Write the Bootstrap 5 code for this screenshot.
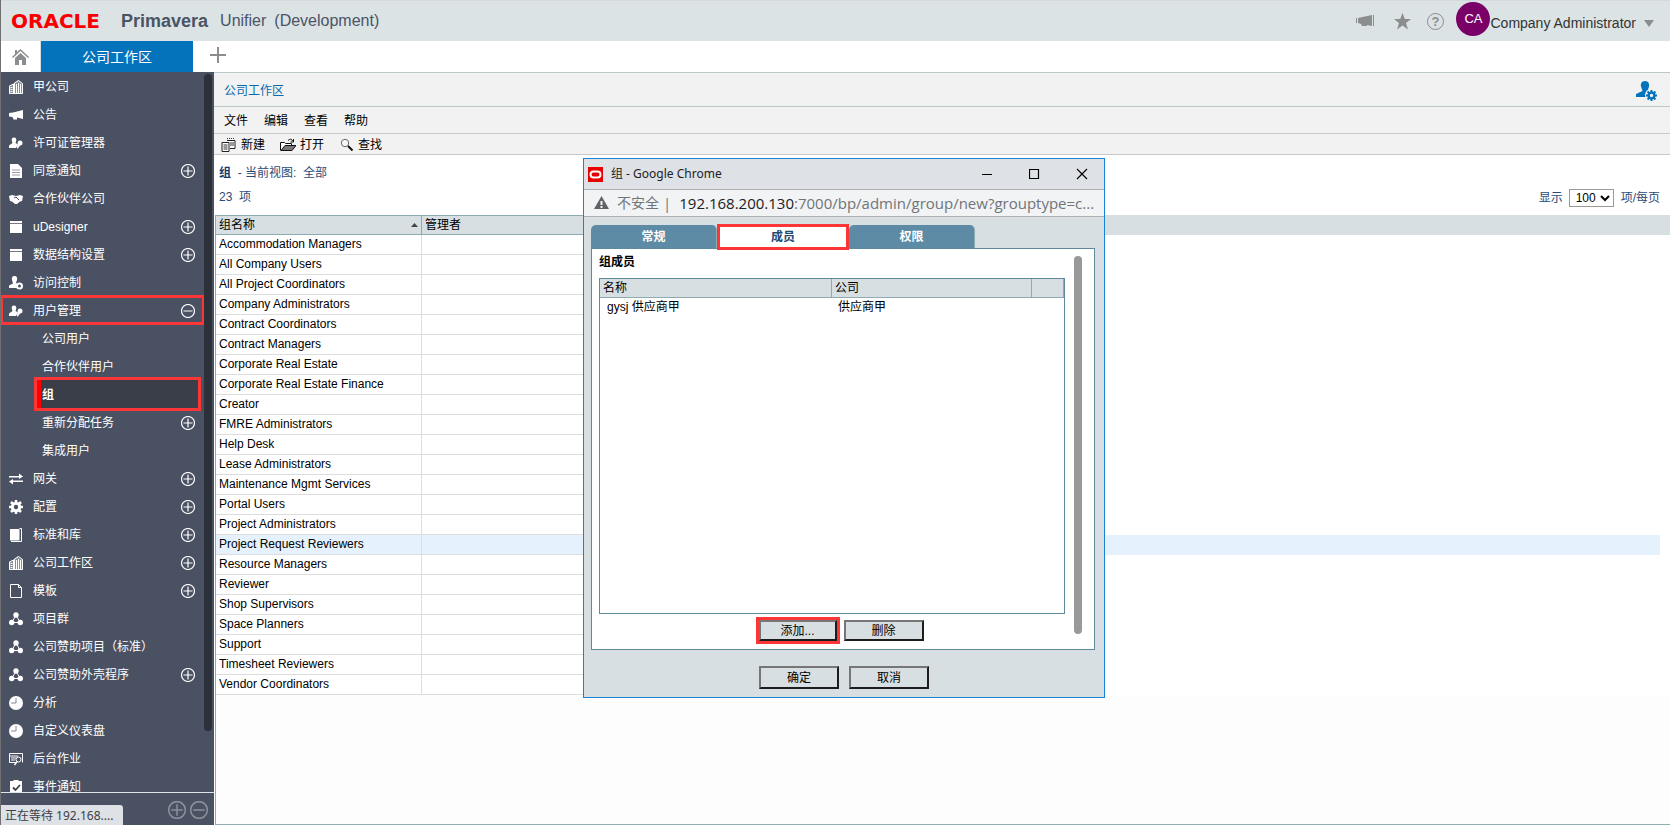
<!DOCTYPE html>
<html lang="zh-CN">
<head>
<meta charset="utf-8">
<meta name="viewport" content="width=device-width, initial-scale=1">
<title>Primavera Unifier</title>
<link href="https://cdn.jsdelivr.net/npm/bootstrap@5.3.0/dist/css/bootstrap.min.css" rel="stylesheet">
<style>
body{font:12px/18px "Liberation Sans","Noto Sans CJK SC",sans-serif;color:#000;height:100vh;overflow:hidden;border-left:1px solid #707070}
a{text-decoration:none;color:inherit}
button{font:inherit}
svg{display:block;flex:none}
.plain{border:0;background:none;padding:0;color:inherit}
.topbar{height:41px;background:#dbe3e5;border-top:1px solid #d3d9dc;color:#4b5465;padding:0 8px 0 10px}
.oracle{font:700 20px/24px "DejaVu Sans",sans-serif;color:#f80000;width:95px}
.prod{font-size:18px;font-weight:700;margin-left:15px}
.sub{font-size:16px}
.avatar{width:34px;height:34px;background:#7a0068;color:#fff;font-size:13px;margin:0 0 4px 12px}
.user{font-size:14px;color:#333}
.tabbar{height:31px;background:#fff}
.home{width:40px;color:#8b8d8f;border-right:1px solid #d5dcdf}
.worktab{width:152px;background:#0572bc;color:#fff;font-size:14px}
.side{width:213px;background:#4a5162;color:#fff}
.tree{overflow:hidden;min-height:0}
.tree li{height:28px;padding:2px 19px 0 8px;display:flex;align-items:center}
.tree li>svg:first-child{width:14px;height:14px;margin-right:10px}
.tree li>a{flex:1;color:#fff}
.tree .child{padding-left:41px}
.tree .current{margin:0 16px 0 36px;padding:2px 0 0 1px;background:#393e48;border-left:4px solid #f00;font-weight:700;outline:3px solid #fb3636}
.tree .open{outline:3px solid #fb3636;outline-offset:-2px;margin:0 10px 0 0;padding:2px 9px 0 8px}
.thumb{right:2px;top:2px;bottom:94px;width:8px;border-radius:4px;background:#2c3039}
.sidefoot{height:33px;border-top:1px solid #dfe5e7;padding:2px 6px 0 0;color:#8b909b}
.status{left:0;bottom:0;width:122px;height:20px;background:#dee1e6;color:#3c4043;border-radius:0 3px 0 0;padding:2px 4px 0;font-family:"Noto Sans","Noto Sans CJK SC",sans-serif}
.bar{background:#f2f2f2;border-bottom:1px solid #c8c8c8;padding-top:2px}
.crumb{height:35px;border-top:1px solid #bcc9ca;border-bottom-color:#bcc9ca;color:#0a69ad;padding:2px 12px 0 10px}
.menus{height:27px;padding-left:10px;gap:16px}
.tools{height:21px;padding-left:7px;gap:15px}
.info{height:60px;padding:9px 10px 0 5px;color:#2b4a78}
.info b{color:#123a6c}
.count{margin-top:6px}
.pager select{width:45px;height:18px;border:1px solid #999;font-size:12px;padding:0 0 0 2px;background:#fff;color:#000;margin:0 7px 0 6px}
.listarea{border-left:1px solid #8fabb2;border-bottom:1px solid #92adb3;margin-left:1px;background:#fdfdfd}
.grid{width:100%;border-collapse:separate;border-spacing:0;table-layout:fixed}
.grid th,.grid td{height:20px;padding:0 3px;line-height:18px;vertical-align:middle;white-space:nowrap}
.grid td{line-height:19px}
.grid th{background:#d8dfe2;font-weight:400}
.grid th.edge{border:solid #8fabb2;border-width:1px 1px 1px 0}
.grid td{background:#fff}
.grid td.edge{border-right:1px solid #ddd;border-bottom:1px solid #ddd}
.grid .on td{background:#e5f2fd}
.grid .on td:last-child{background:#fff}
.dlg{left:582px;top:158px;width:522px;height:540px;background:#d8dfe2;border:1px solid #1883d7;display:flex;flex-direction:column}
.dlgtitle{height:31px;background:#dee1e6;border-bottom:1px solid #b0b0b0;font-family:"Noto Sans","Noto Sans CJK SC",sans-serif;color:#222;padding:0 16px 0 4px}
.addr{height:27px;background:#f1f3f4;border-bottom:1px solid #b0b0b0;font:15px/20px "Open Sans","Noto Sans CJK SC",sans-serif;color:#70757a;padding:0 10px}
.addr .warn{font-size:14px}
.host{color:#202124}
.dtabs{padding:8px 7px 0 7px}
.dtabs button{width:126px;height:23px;border:0;border-radius:5px 5px 0 0;background:#5d8aa5;color:#fff;font-weight:700;border-right:1px solid #8fabb2}
.dtabs .cur{width:132px;background:#fff;color:#1f4a73;border:3px solid #fb3636;height:26px;border-radius:0;position:relative;z-index:1;margin:-1px 0 -2px}
.panel{flex:1;min-height:0;margin:0 9px 0 7px;border:1px solid #5d8a9d;background:#fff;padding:4px 29px 8px 7px}
.members{flex:1;border:1px solid #5d8a9d;margin-top:7px}
.members th{border-right:1px solid #8fabb2;border-bottom:1px solid #8fabb2}
.members .grid th{height:19px;line-height:16px}
.members .grid td{height:18px;line-height:18px}
.members td:first-child{padding-left:7px}
.members td:nth-child(2){padding-left:6px}
.vbar{right:12px;top:7px;bottom:15px;width:8px;border-radius:4px;background:#999}
.cmd{width:80px;background:#d8dfe2;border:2px solid;border-color:#767676 #1c1c1c #1c1c1c #767676;color:#000;padding:0;line-height:18px;height:21px}
.big{height:23px}
.memberbtns{gap:7px;margin-top:6px;padding-left:18px}
.mark-add{outline:3px solid #fb3636;width:78px}
.dlgbtns{gap:10px;padding:16px 0 8px}
</style>
</head>
<body class="d-flex flex-column position-relative">
<svg width="0" height="0" class="position-absolute">
<symbol id="bld" viewBox="0 0 14 14"><path d="M0 5.500 4.500 3.500 9 0l5 3.500V14H0z" fill="#fff" fill-opacity=".35"/><path d="M.5 13.500V6l4-2v9.500M5.500 13V3l4-2.500 4 3v10H.5" fill="none" stroke="#fff"/><path d="M1.500 7.500h2M1.500 9.500h2M1.500 11.500h2" stroke="#fff"/><path d="M7.500 4v9M9.500 3v10M11.500 4v9" stroke="#fff" fill="none"/></symbol>
<symbol id="horn" viewBox="0 0 14 14"><path d="M0 5 4 4.500 14 2v9L8 9.500V11.500H4.500L3.500 9 0 8.500z" fill="currentColor"/></symbol>
<symbol id="usr" viewBox="0 0 14 14"><path d="M5 1.500c2 0 2.500 1.500 2.300 3L6.500 7l2.500 1.500-2 3.500H0V9.500L3.500 7 2.700 4.500C2.500 3 3 1.500 5 1.500z" fill="#fff"/><path d="M11 4.500a2.500 2.500 0 1 1 0 5L8.500 13 7.800 10.500 9 8.500A2.500 2.500 0 0 1 11 4.500z" fill="#fff"/></symbol>
<symbol id="doc" viewBox="0 0 14 14"><path d="M1 0h8l4 4v10H1z" fill="#fff"/><path d="M3 6h8M3 8.500h8M3 11h8" stroke="#99a" fill="none"/></symbol>
<symbol id="hands" viewBox="0 0 14 14"><path d="M0 4l3-1 4 1 4-1 3 1-1 5-2 .5L8 12H6L3 9.500 1 9z" fill="#fff"/><path d="M5 6l2-1 3 3" stroke="#4a5162" fill="none"/></symbol>
<symbol id="win" viewBox="0 0 14 14"><path d="M1 1h12v12H1z" fill="#fff"/><path d="M1 3.500h12" stroke="#778"/></symbol>
<symbol id="acc" viewBox="0 0 14 14"><path d="M5.500 0C8 0 8.500 2 8 4L7 7l1.500 1L8 12H0V9.500L4 7.500 3 4C2.500 2 3 0 5.500 0z" fill="#fff"/><circle cx="10.500" cy="10" r="2.500" fill="none" stroke="#fff" stroke-width="2"/></symbol>
<symbol id="swap" viewBox="0 0 14 14"><path d="M0 4h10V1.500L14 4.500 10 7V5.500H0zM14 8.500H4V7L0 9.500 4 12.500V10h10z" fill="#fff"/></symbol>
<symbol id="gear" viewBox="0 0 14 14"><circle cx="7" cy="7" r="3.700" fill="none" stroke="currentColor" stroke-width="3"/><path d="M7 0v3M7 11v3M0 7h3M11 7h3M2 2l2 2M10 10l2 2M12 2l-2 2M2 12l2-2" stroke="currentColor" stroke-width="2.600"/></symbol>
<symbol id="book" viewBox="0 0 14 14"><path d="M1 1h9.500v11.500H1z" fill="#fff"/><path d="M10.500.500h2v13H2" stroke="#fff" fill="none"/></symbol>
<symbol id="page" viewBox="0 0 14 14"><path d="M1.500.5h8l3 3v10h-11zM9.500.5v3h3" fill="none" stroke="#fff"/></symbol>
<symbol id="tri" viewBox="0 0 14 14"><circle cx="7" cy="3" r="2.700" fill="#fff"/><circle cx="2.700" cy="10.500" r="2.700" fill="#fff"/><circle cx="11.300" cy="10.500" r="2.700" fill="#fff"/><path d="M7 3 2.700 10.500h8.600z" stroke="#fff" fill="none"/></symbol>
<symbol id="pie" viewBox="0 0 14 14"><circle cx="7" cy="7" r="7" fill="#fff"/><path d="M7 2v5H2" stroke="#889" fill="none"/></symbol>
<symbol id="job" viewBox="0 0 14 14"><path d="M7 10.500H.5v-9h13v9M.5 4H9M2 6h5M2 8h4" fill="none" stroke="#fff"/><circle cx="9.500" cy="7.500" r="2.500" fill="none" stroke="#fff"/><path d="M8 9.500 5.500 13" stroke="#fff" stroke-width="1.500"/></symbol>
<symbol id="chk" viewBox="0 0 14 14"><path d="M1 1h3l1-1h4l1 1h3v13H1z" fill="#fff"/><path d="M4 7.500l2.500 2.500L11 5" fill="none" stroke="#3a4152" stroke-width="1.800"/></symbol>
<symbol id="plus" viewBox="0 0 14 14"><path d="M7 .5a6.500 6.500 0 1 1 0 13 6.500 6.500 0 0 1 0-13zM7 2.500v9M2.500 7h9" fill="none" stroke="currentColor" stroke-width="1.200"/></symbol>
<symbol id="minus" viewBox="0 0 14 14"><path d="M7 .5a6.500 6.500 0 1 1 0 13 6.500 6.500 0 0 1 0-13zM2.500 7h9" fill="none" stroke="currentColor" stroke-width="1.200"/></symbol>
</svg>

<header class="topbar d-flex align-items-center flex-shrink-0">
  <span class="oracle">ORACLE</span><span class="prod">Primavera</span><span class="sub ms-2 ps-1">Unifier</span><span class="sub ms-2">(Development)</span>
  <div class="d-flex align-items-center ms-auto me-2">
    <button class="plain" aria-label="公告"><svg width="18" height="14" viewBox="0 0 18 14" fill="#8b8d8f"><path d="M0 4h1v5H0zM2 4l14-3v11l-5-1v1H6l-1-2-3-1zM17 1h1v11h-1z"/></svg></button>
    <button class="plain ms-3" aria-label="收藏"><svg class="ms-1" width="17" height="17" viewBox="0 0 17 17" fill="#8b8d8f"><path d="m8.500 0 2.300 6H17l-5 4 2 6.500-5.500-4-5.500 4L5 10 0 6h6.200z"/></svg></button>
    <button class="plain ms-3" aria-label="帮助"><svg width="17" height="17" viewBox="0 0 17 17"><circle cx="8.500" cy="8.500" r="8" fill="none" stroke="#8b8d8f"/><text x="8.500" y="13" text-anchor="middle" font-size="13" font-weight="700" fill="#8b8d8f">?</text></svg></button>
    <span class="avatar rounded-circle d-flex align-items-center justify-content-center">CA</span>
    <a href="#" class="user d-flex align-items-center mt-1">Company Administrator<svg class="ms-2" width="10" height="7"><path d="M0 0h10L5 7z" fill="#8b8d8f"/></svg></a>
  </div>
</header>

<nav class="tabbar d-flex flex-shrink-0">
  <a href="#" class="home d-flex align-items-center justify-content-center" aria-label="主页"><svg width="17" height="16" viewBox="0 0 17 16" fill="currentColor"><path d="M8.500 0 17 8l-1 1-7.500-7L1 9 0 8l3-3V1h2v2zM3 9l5.500-5L14 9v7h-4v-5H7v5H3z"/></svg></a>
  <a href="#" class="worktab d-flex align-items-center justify-content-center">公司工作区</a>
  <button class="plain ms-3 pb-1" aria-label="新标签页"><svg width="18" height="18"><path d="M9 1v16M1 9h16" stroke="#8b8d8f" stroke-width="2"/></svg></button>
</nav>

<div class="d-flex flex-fill" style="min-height:0">
  <aside class="side d-flex flex-column flex-shrink-0 position-relative">
    <ul class="tree list-unstyled mb-0 flex-fill">
      <li><svg><use href="#bld"/></svg><a href="#">甲公司</a></li>
      <li><svg><use href="#horn"/></svg><a href="#">公告</a></li>
      <li><svg><use href="#usr"/></svg><a href="#">许可证管理器</a></li>
      <li><svg><use href="#doc"/></svg><a href="#">同意通知</a><svg width="14" height="14"><use href="#plus"/></svg></li>
      <li><svg><use href="#hands"/></svg><a href="#">合作伙伴公司</a></li>
      <li><svg><use href="#win"/></svg><a href="#">uDesigner</a><svg width="14" height="14"><use href="#plus"/></svg></li>
      <li><svg><use href="#win"/></svg><a href="#">数据结构设置</a><svg width="14" height="14"><use href="#plus"/></svg></li>
      <li><svg><use href="#acc"/></svg><a href="#">访问控制</a></li>
      <li class="open"><svg><use href="#usr"/></svg><a href="#">用户管理</a><svg width="14" height="14"><use href="#minus"/></svg></li>
      <li class="child"><a href="#">公司用户</a></li>
      <li class="child"><a href="#">合作伙伴用户</a></li>
      <li class="current"><a href="#">组</a></li>
      <li class="child"><a href="#">重新分配任务</a><svg width="14" height="14"><use href="#plus"/></svg></li>
      <li class="child"><a href="#">集成用户</a></li>
      <li><svg><use href="#swap"/></svg><a href="#">网关</a><svg width="14" height="14"><use href="#plus"/></svg></li>
      <li><svg><use href="#gear"/></svg><a href="#">配置</a><svg width="14" height="14"><use href="#plus"/></svg></li>
      <li><svg><use href="#book"/></svg><a href="#">标准和库</a><svg width="14" height="14"><use href="#plus"/></svg></li>
      <li><svg><use href="#bld"/></svg><a href="#">公司工作区</a><svg width="14" height="14"><use href="#plus"/></svg></li>
      <li><svg><use href="#page"/></svg><a href="#">模板</a><svg width="14" height="14"><use href="#plus"/></svg></li>
      <li><svg><use href="#tri"/></svg><a href="#">项目群</a></li>
      <li><svg><use href="#tri"/></svg><a href="#">公司赞助项目（标准）</a></li>
      <li><svg><use href="#tri"/></svg><a href="#">公司赞助外壳程序</a><svg width="14" height="14"><use href="#plus"/></svg></li>
      <li><svg><use href="#pie"/></svg><a href="#">分析</a></li>
      <li><svg><use href="#pie"/></svg><a href="#">自定义仪表盘</a></li>
      <li><svg><use href="#job"/></svg><a href="#">后台作业</a></li>
      <li><svg><use href="#chk"/></svg><a href="#">事件通知</a></li>
    </ul>
    <div class="thumb position-absolute"></div>
    <div class="sidefoot d-flex align-items-center justify-content-end gap-1 flex-shrink-0">
      <button class="plain" aria-label="展开"><svg width="18" height="18"><use href="#plus"/></svg></button>
      <button class="plain" aria-label="折叠"><svg width="18" height="18"><use href="#minus"/></svg></button>
    </div>
  </aside>

  <main class="flex-fill d-flex flex-column bg-white" style="min-width:0">
    <div class="bar crumb d-flex align-items-center justify-content-between flex-shrink-0">
      <a href="#">公司工作区</a>
      <button class="plain" aria-label="用户设置"><svg width="22" height="20" viewBox="0 0 22 20"><path d="M9 0c3.500 0 4.500 3 4 5.500L11.500 10l2 1.500-1 4.500H0v-3L6.500 10 5 5.500C4.500 3 5.500 0 9 0z" fill="#0572bc"/><g color="#0572bc"><circle cx="15" cy="14" r="6" fill="#f2f2f2"/><svg x="10" y="9" width="11" height="11"><use href="#gear"/></svg></g></svg></button>
    </div>
    <div class="bar menus d-flex align-items-center flex-shrink-0"><a href="#">文件</a><a href="#">编辑</a><a href="#">查看</a><a href="#">帮助</a></div>
    <div class="bar tools d-flex align-items-center flex-shrink-0">
      <button class="plain d-flex align-items-center"><svg class="me-1" width="16" height="14" viewBox="0 0 16 14"><path d="M1 4.500h7v9H1zM6 2.500h8v8H9" fill="#fff" stroke="#222"/><path d="M2.500 7h4M2.500 9h4M2.500 11h4M9 5h4M9 7h4" stroke="#333"/><path d="M6 .5h8" stroke="#333" stroke-dasharray="1 1"/></svg>新建</button>
      <button class="plain d-flex align-items-center"><svg class="me-1" width="16" height="14" viewBox="0 0 16 14"><path d="M.5 12.500v-8h4l1 1h6v2" fill="#fff" stroke="#111"/><path d="m1 12.500 4-5h11l-4 5z" fill="#777" stroke="#111"/><path d="M8 2.500q3-3 5 1M13.500 1v3h-3" fill="none" stroke="#111"/></svg>打开</button>
      <button class="plain d-flex align-items-center"><svg class="me-1" width="15" height="14" viewBox="0 0 15 14"><circle cx="6" cy="5" r="3.700" fill="#f8f8f8" stroke="#666"/><path d="m9 8 4.500 4.500" stroke="#111" stroke-width="2"/></svg>查找</button>
    </div>
    <div class="info d-flex justify-content-between flex-shrink-0">
      <div><div><b>组</b>&nbsp; - 当前视图:&nbsp; 全部</div><div class="count">23 &nbsp;项</div></div>
      <div class="pager d-flex align-items-center mt-3"><label for="per">显示</label><select id="per"><option>100</option></select><span>项/每页</span></div>
    </div>
    <div class="listarea flex-fill">
      <table class="grid">
        <colgroup><col style="width:206px"><col style="width:320px"><col><col style="width:10px"></colgroup>
        <thead><tr><th class="edge"><span class="d-flex align-items-center justify-content-between">组名称<svg width="7" height="4"><path d="M0 4h7L3.500 0z" fill="#444"/></svg></span></th><th class="edge">管理者</th><th></th><th></th></tr></thead>
        <tbody>
<tr><td class="edge">Accommodation Managers</td><td class="edge"></td><td></td><td></td></tr>
<tr><td class="edge">All Company Users</td><td class="edge"></td><td></td><td></td></tr>
<tr><td class="edge">All Project Coordinators</td><td class="edge"></td><td></td><td></td></tr>
<tr><td class="edge">Company Administrators</td><td class="edge"></td><td></td><td></td></tr>
<tr><td class="edge">Contract Coordinators</td><td class="edge"></td><td></td><td></td></tr>
<tr><td class="edge">Contract Managers</td><td class="edge"></td><td></td><td></td></tr>
<tr><td class="edge">Corporate Real Estate</td><td class="edge"></td><td></td><td></td></tr>
<tr><td class="edge">Corporate Real Estate Finance</td><td class="edge"></td><td></td><td></td></tr>
<tr><td class="edge">Creator</td><td class="edge"></td><td></td><td></td></tr>
<tr><td class="edge">FMRE Administrators</td><td class="edge"></td><td></td><td></td></tr>
<tr><td class="edge">Help Desk</td><td class="edge"></td><td></td><td></td></tr>
<tr><td class="edge">Lease Administrators</td><td class="edge"></td><td></td><td></td></tr>
<tr><td class="edge">Maintenance Mgmt Services</td><td class="edge"></td><td></td><td></td></tr>
<tr><td class="edge">Portal Users</td><td class="edge"></td><td></td><td></td></tr>
<tr><td class="edge">Project Administrators</td><td class="edge"></td><td></td><td></td></tr>
<tr class="on"><td class="edge">Project Request Reviewers</td><td class="edge"></td><td></td><td></td></tr>
<tr><td class="edge">Resource Managers</td><td class="edge"></td><td></td><td></td></tr>
<tr><td class="edge">Reviewer</td><td class="edge"></td><td></td><td></td></tr>
<tr><td class="edge">Shop Supervisors</td><td class="edge"></td><td></td><td></td></tr>
<tr><td class="edge">Space Planners</td><td class="edge"></td><td></td><td></td></tr>
<tr><td class="edge">Support</td><td class="edge"></td><td></td><td></td></tr>
<tr><td class="edge">Timesheet Reviewers</td><td class="edge"></td><td></td><td></td></tr>
<tr><td class="edge">Vendor Coordinators</td><td class="edge"></td><td></td><td></td></tr>
        </tbody>
      </table>
    </div>
  </main>
</div>

<div class="status position-absolute">正在等待 192.168....</div>

<section class="dlg position-absolute" role="dialog" aria-label="组">
  <div class="dlgtitle d-flex align-items-center flex-shrink-0">
    <svg width="15" height="15"><path d="M0 0h15v15H0z" fill="#e60000"/><rect x="2.500" y="4.500" width="10" height="6" rx="3" fill="none" stroke="#fff" stroke-width="2"/></svg>
    <span class="ms-1 ps-1">组 - Google Chrome</span>
    <button class="plain ms-auto" aria-label="最小化"><svg width="12" height="12"><path d="M1 6.500h10" stroke="#000"/></svg></button>
    <button class="plain ms-4 ps-2" aria-label="最大化"><svg class="ms-1" width="11" height="11"><path d="M.5.5h9v9h-9z" fill="none" stroke="#000" stroke-width="1.200"/></svg></button>
    <button class="plain ms-4 ps-2" aria-label="关闭"><svg class="ms-1" width="12" height="12"><path d="m1 1 10 10M11 1 1 11" stroke="#000" stroke-width="1.200"/></svg></button>
  </div>
  <div class="addr d-flex align-items-center flex-shrink-0">
    <svg width="15" height="14"><path d="M7.500 0 15 13H0z" fill="#5f6368"/><path d="M7.500 5v4M7.500 10v2" stroke="#f1f3f4" stroke-width="2"/></svg>
    <span class="warn ms-2 text-nowrap">不安全</span><span class="ms-1 me-2">|</span><span class="text-nowrap"><span class="host">192.168.200.130</span>:7000/bp/admin/group/new?grouptype=c...</span>
  </div>
  <div class="dtabs d-flex flex-shrink-0"><button>常规</button><button class="cur">成员</button><button>权限</button></div>
  <div class="panel position-relative d-flex flex-column">
    <b>组成员</b>
    <div class="members">
      <table class="grid">
        <colgroup><col style="width:50%"><col style="width:43%"><col></colgroup>
        <thead><tr><th>名称</th><th>公司</th><th></th></tr></thead>
        <tbody><tr><td>gysj 供应商甲</td><td>供应商甲</td><td></td></tr></tbody>
      </table>
    </div>
    <div class="memberbtns d-flex justify-content-center"><button class="cmd mark-add">添加...</button><button class="cmd">删除</button></div>
    <div class="vbar position-absolute"></div>
  </div>
  <div class="dlgbtns d-flex justify-content-center flex-shrink-0"><button class="cmd big">确定</button><button class="cmd big">取消</button></div>
</section>
<script src="https://cdn.jsdelivr.net/npm/bootstrap@5.3.0/dist/js/bootstrap.bundle.min.js"></script>
</body>
</html>
